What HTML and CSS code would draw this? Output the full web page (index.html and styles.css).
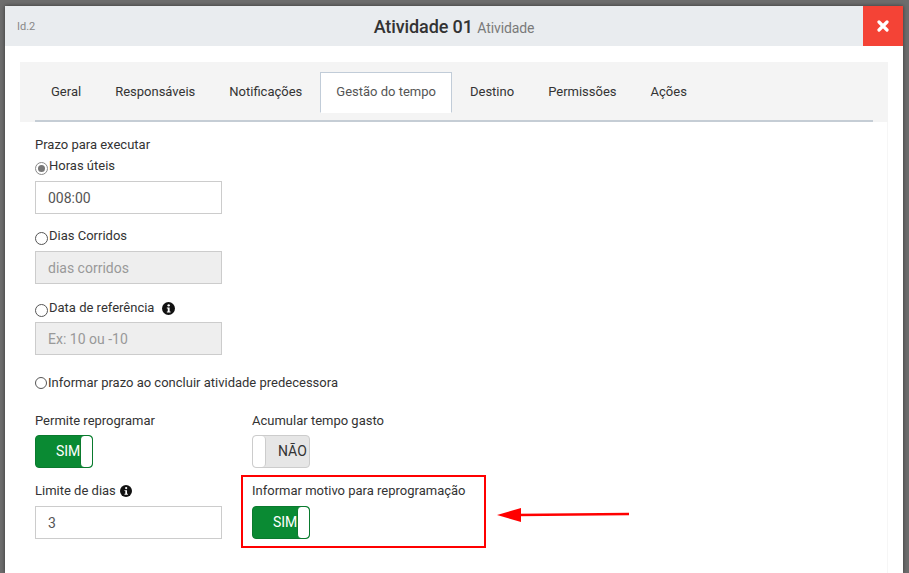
FILE: index.html
```html
<!DOCTYPE html>
<html lang="pt-BR">
<head>
<meta charset="utf-8">
<title>Atividade 01</title>
<link rel="stylesheet" href="styles.css">
</head>
<body>
<div class="backdrop">
  <div class="modal">
    <header class="modal-header">
      <span class="modal-id">Id.2</span>
      <h1 class="modal-title">Atividade 01 <small>Atividade</small></h1>
      <div class="header-end">
        <button class="close-btn" aria-label="Fechar">
          <svg width="12" height="12" viewBox="0 0 12 12"><path d="M2 2 L10 10 M10 2 L2 10" stroke="#fff" stroke-width="3.2" stroke-linecap="round"/></svg>
        </button>
      </div>
    </header>
    <div class="modal-body">
      <nav class="tabbar">
        <ul class="tabs">
          <li class="tab">Geral</li>
          <li class="tab">Responsáveis</li>
          <li class="tab">Notificações</li>
          <li class="tab active">Gestão do tempo</li>
          <li class="tab">Destino</li>
          <li class="tab">Permissões</li>
          <li class="tab">Ações</li>
        </ul>
        <div class="tab-line"></div>
      </nav>

      <div class="content">
        <div class="label first">Prazo para executar</div>
        <div class="radio-row r1"><span class="radio checked"></span>Horas úteis</div>
        <div class="input i1">008:00</div>

        <div class="radio-row r2"><span class="radio"></span>Dias Corridos</div>
        <div class="input disabled i2">dias corridos</div>

        <div class="radio-row r3"><span class="radio"></span>Data de referência <span class="info-icon big"><svg width="13" height="13" viewBox="0 0 14 14"><circle cx="7" cy="7" r="7" fill="#111"/><circle cx="7.2" cy="3.6" r="1.3" fill="#fff"/><path d="M5.2 6 H8.2 V10.2 H9.2 V11.3 H5.2 V10.2 H6.2 V7.1 H5.2 Z" fill="#fff"/></svg></span></div>
        <div class="input disabled i3">Ex: 10 ou -10</div>

        <div class="radio-row r4"><span class="radio small"></span>Informar prazo ao concluir atividade predecessora</div>

        <div class="grid">
          <div class="cell">
            <div class="label">Permite reprogramar</div>
            <div class="toggle on"><span class="toggle-text">SIM</span><span class="knob"></span></div>
          </div>
          <div class="cell">
            <div class="label">Acumular tempo gasto</div>
            <div class="toggle off"><span class="knob"></span><span class="toggle-text">NÃO</span></div>
          </div>
          <div class="cell row2">
            <div class="label">Limite de dias <span class="info-icon"><svg width="12" height="12" viewBox="0 0 14 14"><circle cx="7" cy="7" r="7" fill="#111"/><circle cx="7.2" cy="3.6" r="1.3" fill="#fff"/><path d="M5.2 6 H8.2 V10.2 H9.2 V11.3 H5.2 V10.2 H6.2 V7.1 H5.2 Z" fill="#fff"/></svg></span></div>
            <div class="input i4">3</div>
          </div>
          <div class="cell row2 highlight-cell">
            <div class="label">Informar motivo para reprogramação</div>
            <div class="toggle on"><span class="toggle-text">SIM</span><span class="knob"></span></div>
            <div class="highlight-box"></div>
            <svg class="arrow" width="140" height="20" viewBox="0 0 140 20"><line x1="132" y1="9" x2="20" y2="10" stroke="#f00" stroke-width="2.5"/><polygon points="0,10 24,3 24,17" fill="#f00"/></svg>
          </div>
        </div>
      </div>
      <div class="side-line"></div>
    </div>
  </div>
</div>
</body>
</html>
```

FILE: styles.css
```css
* { box-sizing: border-box; }
html, body { margin: 0; padding: 0; }
body {
  width: 909px;
  height: 573px;
  overflow: hidden;
  background: #6d6d6d;
  font-family: Roboto, "Liberation Sans", Arial, sans-serif;
  color: #333;
}
.backdrop {
  height: 573px;
  padding: 6px 6px 0 5px;
  background: #6d6d6d;
}
.modal {
  width: 898px;
  height: 567px;
  background: #fff;
  box-shadow: 0 0 4px rgba(0,0,0,0.5);
}
.modal-header {
  height: 40px;
  background: #e9ecef;
  display: grid;
  grid-template-columns: 1fr auto 1fr;
  align-items: center;
}
.modal-id {
  font-size: 11px;
  color: #888;
  padding-left: 12px;
}
.modal-title {
  margin: 0;
  font-size: 18px;
  font-weight: 500;
  color: #333;
  letter-spacing: -0.1px;
}
.modal-title small {
  font-size: 14px;
  font-weight: 400;
  color: #7a7a7a;
}
.header-end {
  display: flex;
  justify-content: flex-end;
  height: 40px;
}
.close-btn {
  width: 40px;
  height: 40px;
  border: 0;
  padding: 0;
  background: #f44336;
  display: flex;
  align-items: center;
  justify-content: center;
}
.modal-body {
  padding: 16px 15px 0 15px;
  position: relative;
  height: 527px;
}
.side-line {
  position: absolute;
  top: 76px;
  right: 15px;
  width: 1px;
  height: 460px;
  background: #f6f6f6;
}
.tabbar {
  background: #f4f4f4;
  height: 60px;
  padding: 10px 15px 0 15px;
}
.tabs {
  list-style: none;
  margin: 0;
  padding: 0;
  display: flex;
  height: 41px;
}
.tab {
  padding: 0 15px 2px 15px;
  margin-right: 2px;
  font-size: 13px;
  line-height: 37px;
  color: #333;
  border: 1px solid transparent;
}
.tab.active {
  background: #fff;
  border-color: #c1ccd8;
  border-bottom-color: #fff;
  color: #555;
}
.tab-line {
  margin-top: 7px;
  height: 2px;
  background: #c5cdd5;
}
.content {
  padding: 13px 15px 0 15px;
  font-size: 13px;
}
.label {
  line-height: 20px;
  font-size: 13px;
  color: #333;
  display: flex;
  align-items: center;
  gap: 4px;
}
.radio-row {
  line-height: 20px;
  display: flex;
  align-items: center;
  color: #333;
}
.r1 { margin-top: 1px; }
.r2 { margin-top: 12px; }
.r3 { margin-top: 14px; }
.r4 { margin-top: 18px; }
.radio {
  width: 13px;
  height: 13px;
  border: 1px solid #555;
  border-radius: 50%;
  margin-top: 5px;
  margin-right: 1px;
  flex: none;
  background: #fff;
  position: relative;
}
.radio.checked {
  border-color: #8a8a8a;
}
.radio.checked::after {
  content: "";
  position: absolute;
  left: 2px;
  top: 2px;
  width: 7px;
  height: 7px;
  border-radius: 50%;
  background: #777;
}
.radio.small {
  width: 12px;
  height: 12px;
  margin-top: 0;
}
.info-icon { display: inline-flex; margin-left: 8px; }
.label .info-icon { margin-left: 0; }
.input {
  width: 187px;
  height: 33px;
  border: 1px solid #ccc;
  padding-left: 12px;
  padding-top: 1px;
  font-size: 14px;
  line-height: 31px;
  color: #555;
  background: #fff;
}
.input.disabled {
  background: #eee;
  color: #999;
}
.i1 { margin-top: 5px; }
.i2 { margin-top: 5px; }
.i3 { margin-top: 4px; }
.grid {
  margin-top: 18px;
  display: grid;
  grid-template-columns: 217px 240px;
}
.cell .label + .toggle, .cell .label + .input { margin-top: 4px; }
.cell.row2 { margin-top: 13px; }
.cell.row2 .label + .toggle, .cell.row2 .label + .input { margin-top: 5px; }
.toggle {
  width: 58px;
  height: 33px;
  border-radius: 4px;
  display: flex;
  align-items: stretch;
  font-size: 14px;
  overflow: hidden;
}
.toggle.on {
  background: #0a8a33;
  border: 1px solid #0a7a2e;
  color: #fff;
}
.toggle.on .toggle-text {
  flex: 1;
  line-height: 31px;
  padding-left: 20px;
}
.toggle.on .knob {
  width: 13px;
  background: #fff;
  border-radius: 4px;
  border-left: 1px solid #0a7a2e;
}
.toggle.off {
  background: #e6e6e6;
  border: 1px solid #ccc;
  color: #333;
}
.toggle.off .knob {
  width: 13px;
  background: #fff;
  border-radius: 4px;
  border-right: 1px solid #ccc;
}
.toggle.off .toggle-text {
  flex: 1;
  line-height: 31px;
  padding-left: 12px;
}
.highlight-cell { position: relative; }
.highlight-box {
  position: absolute;
  left: -11px;
  top: -6px;
  width: 245px;
  height: 73px;
  border: 2px solid #f00;
  pointer-events: none;
}
.arrow {
  position: absolute;
  left: 245px;
  top: 24px;
}
```
